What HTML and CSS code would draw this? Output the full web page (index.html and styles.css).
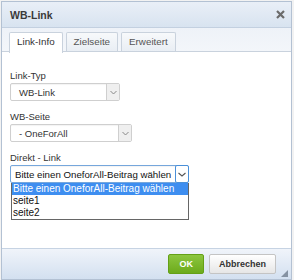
FILE: index.html
```html
<!DOCTYPE html>
<html lang="de">
<head>
  <meta charset="UTF-8" />
  <title>WB-Link</title>
  <link rel="stylesheet" href="styles.css">
</head>
<body>
  <div class="dialog">
    <div class="dialog-title">
      <span>WB-Link</span>
      <svg class="close" width="9" height="9" viewBox="0 0 9 9"><path d="M1 1 L8 8 M8 1 L1 8" stroke="#6b6b6b" stroke-width="2.2"/></svg>
    </div>

    <div class="tabs">
      <div class="tab active">Link-Info</div>
      <div class="tab">Zielseite</div>
      <div class="tab">Erweitert</div>
    </div>

    <div class="dialog-body">
      <div class="field">
        <label>Link-Typ</label>
        <div class="select" style="width: 110px">
          <span class="value">WB-Link</span>
          <span class="arrow"><svg width="7" height="5" viewBox="0 0 7 5"><path d="M0.5 1 L3.5 4 L6.5 1" fill="none" stroke="#888" stroke-width="1"/></svg></span>
        </div>
      </div>

      <div class="field">
        <label>WB-Seite</label>
        <div class="select" style="width: 122px">
          <span class="value">- OneForAll</span>
          <span class="arrow"><svg width="7" height="5" viewBox="0 0 7 5"><path d="M0.5 1 L3.5 4 L6.5 1" fill="none" stroke="#888" stroke-width="1"/></svg></span>
        </div>
      </div>

      <div class="field">
        <label>Direkt - Link</label>
        <div class="select focused" style="width: 179px">
          <span class="value">Bitte einen OneforAll-Beitrag wählen</span>
          <span class="arrow"><svg width="8" height="5" viewBox="0 0 8 5"><path d="M0.5 1 L4 4 L7.5 1" fill="none" stroke="#555" stroke-width="1.1"/></svg></span>
        </div>
        <div class="options">
          <div class="option selected">Bitte einen OneforAll-Beitrag wählen</div>
          <div class="option">seite1</div>
          <div class="option">seite2</div>
        </div>
      </div>
    </div>

    <div class="dialog-footer">
      <button type="button" class="btn ok">OK</button>
      <button type="button" class="btn">Abbrechen</button>
      <span class="grip"></span>
    </div>
  </div>
</body>
</html>
```

FILE: styles.css
```css
body {
  margin: 0;
  background: #f2f2f2;
  font-family: "Liberation Sans", Arial, sans-serif;
  font-size: 9.5px;
  color: #333;
}

.dialog {
  width: 291px;
  height: 279px;
  margin: 1px 0 0 1px;
  border: 1px solid #b3c1d3;
  box-sizing: border-box;
  background: #fff;
  display: flex;
  flex-direction: column;
}

.dialog-title {
  height: 25px;
  flex: none;
  padding: 0 6px 0 8px;
  display: flex;
  align-items: center;
  justify-content: space-between;
  background: linear-gradient(#e9eff7, #d8e3f0);
  border-bottom: 1px solid #c3d0e0;
  font-weight: bold;
  font-size: 10.5px;
  color: #3a3a3a;
}

.close {
  margin-top: -1px;
}

.tabs {
  flex: none;
  display: flex;
  gap: 3px;
  height: 19px;
  padding: 4px 0 0 7px;
  background: linear-gradient(#eef2f8, #f3f6fa);
  border-bottom: 1px solid #c9d2dd;
}

.tab {
  padding: 0 7px;
  line-height: 18px;
  font-size: 9.8px;
  border: 1px solid #c9d2dd;
  border-bottom: none;
  background: linear-gradient(#f7f9fb, #e9eef4);
  color: #555;
  border-radius: 2px 2px 0 0;
}

.tab.active {
  background: #fff;
  color: #333;
  height: 20px;
}

.dialog-body {
  flex: 1;
  padding: 18px 8px 0;
  display: flex;
  flex-direction: column;
  gap: 10px;
}

.field label {
  display: block;
  line-height: 12px;
  margin-bottom: 1px;
  color: #333;
}

.select {
  height: 18px;
  box-sizing: border-box;
  border: 1px solid #cfcfcf;
  border-radius: 2px;
  display: flex;
  align-items: center;
  background: #fff;
  box-shadow: inset 0 1px 1px rgba(0,0,0,0.05);
  font-size: 9.5px;
  color: #333;
}

.select .value {
  flex: 1;
  padding-left: 8px;
  white-space: nowrap;
  overflow: hidden;
}

.select .arrow {
  width: 12px;
  align-self: stretch;
  border-left: 1px solid #cfcfcf;
  background: #efefef;
  display: flex;
  align-items: center;
  justify-content: center;
}

.select.focused {
  border-color: #76a7dc;
  color: #111;
  font-size: 9.7px;
}

.select.focused .value {
  padding-left: 4px;
}

.select.focused .arrow {
  width: 14px;
  background: #fff;
  border: 1px solid #4a90d9;
  border-radius: 2px;
  margin: -1px -1px -1px 0;
  box-sizing: border-box;
}

.options {
  width: 178px;
  margin-left: 1px;
  box-sizing: border-box;
  border: 1px solid #666;
  border-top: none;
  background: #fff;
  color: #111;
  font-size: 10px;
}

.option {
  height: 12px;
  line-height: 12px;
  padding-left: 1px;
  white-space: nowrap;
}

.option.selected {
  background: #3e8ef0;
  color: #fff;
}

.dialog-footer {
  flex: none;
  height: 30px;
  border-top: 1px solid #c6d3e3;
  background: linear-gradient(#f0f4fa, #d3e0f0);
  display: flex;
  justify-content: flex-end;
  align-items: center;
  gap: 5px;
  padding: 0 15px 0 0;
  position: relative;
}

.btn {
  height: 20px;
  margin: 0;
  font-family: "Liberation Sans", Arial, sans-serif;
  font-size: 9px;
  font-weight: bold;
  border-radius: 2px;
  border: 1px solid #c4c4c4;
  background: linear-gradient(#fff, #e6e6e6);
  color: #333;
  padding: 0 9px;
}

.btn.ok {
  background: linear-gradient(#8cc63f, #6cab1c);
  border-color: #64a017;
  color: #fff;
  padding: 0 10px;
}

.grip {
  position: absolute;
  right: 3px;
  bottom: 2px;
  width: 0;
  height: 0;
  border-left: 7px solid transparent;
  border-bottom: 7px solid #8592a2;
}
```
